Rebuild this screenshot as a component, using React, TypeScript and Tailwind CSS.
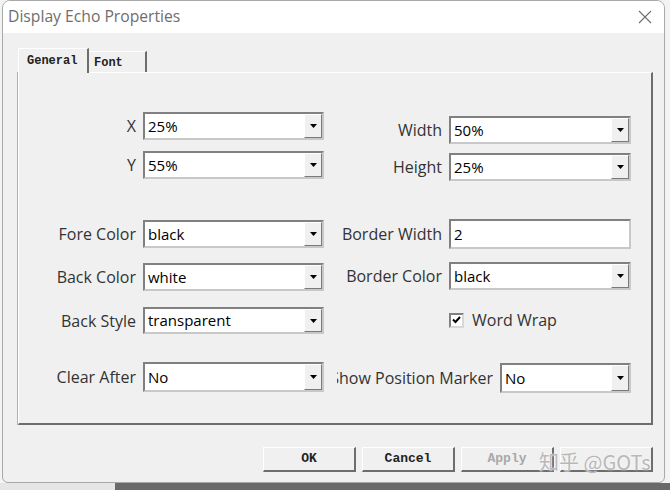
import React from 'react';

const sans = "font-['Open_Sans','Noto_Sans',sans-serif]";
const mono = "font-['Liberation_Mono',monospace]";

function Arrow() {
  return (
    <div className="w-[18px] flex items-center justify-center bg-[#f0f0f0] border-t border-l border-t-white border-l-white border-r border-b border-r-[#7a7a7a] border-b-[#7a7a7a]">
      <svg width="7" height="4" viewBox="0 0 7 4">
        <path d="M0 0h7L3.5 4z" fill="#000" />
      </svg>
    </div>
  );
}

function Combo({ value, w = 'w-[181px]', h = 'h-[28px]', arrow = true }: { value: string; w?: string; h?: string; arrow?: boolean }) {
  return (
    <div className={`${w} ${h} flex shrink-0 bg-white border-2 border-t-[#808080] border-l-[#808080] border-r-[#c8c8c8] border-b-[#c8c8c8]`}>
      <div className="flex-1 flex items-center pl-[3px] text-[15px] text-black leading-none">{value}</div>
      {arrow && <Arrow />}
    </div>
  );
}

function Field({ label, children }: { label: string; children: React.ReactNode }) {
  return (
    <div className="flex items-center justify-end gap-[7px]">
      <span className="text-[16px] text-[#333] whitespace-nowrap">{label}</span>
      {children}
    </div>
  );
}

function Btn({ label, disabled }: { label: string; disabled?: boolean }) {
  return (
    <div
      className={`w-[93px] h-[25px] flex items-center justify-center bg-[#f0f0f0] border-t border-l border-t-white border-l-white border-r-2 border-b-2 border-r-[#6d6d6d] border-b-[#6d6d6d] ${mono} text-[13px] font-bold ${disabled ? 'text-[#a8a8a8]' : 'text-[#222]'}`}
    >
      {label}
    </div>
  );
}

export default function App() {
  return (
    <div className={`w-[670px] h-[490px] bg-[#f3f3f3] overflow-hidden ${sans}`}>
      <div className="ml-[2px] w-[663px] h-[483px] flex flex-col bg-[#f0f0f0] border border-[#a9a9a9] rounded-t-[8px] rounded-b-[6px] overflow-hidden">
        {/* title bar */}
        <div className="h-[32px] shrink-0 bg-white flex items-center justify-between pl-[5px] pr-[12px]">
          <span className="text-[15.7px] text-[#6e6e6e]">Display Echo Properties</span>
          <svg width="14" height="14" viewBox="0 0 14 14">
            <path d="M1 1l12 12M13 1L1 13" stroke="#6e6e6e" strokeWidth="1.1" />
          </svg>
        </div>

        <div className="relative flex-1 flex flex-col pl-[15px]">
          {/* tabs */}
          <div className="flex items-end h-[39px] pt-[15px]">
            <div className={`w-[71px] h-[25px] -mb-[1px] z-10 bg-[#f0f0f0] border-t border-l border-t-white border-l-white border-r-2 border-r-[#6d6d6d] flex items-start pt-[3px] pl-[8px] ${mono} text-[12px] font-bold text-[#222]`}>
              General
            </div>
            <div className={`w-[58px] h-[21px] bg-[#f0f0f0] border-t border-t-white border-r-2 border-r-[#6d6d6d] flex items-start pt-[2px] pl-[5px] ${mono} text-[12px] font-bold text-[#222]`}>
              Font
            </div>
          </div>

          {/* panel */}
          <div className="w-[635px] h-[353px] flex border-t border-l border-t-white border-l-white border-r-2 border-b-2 border-r-[#6d6d6d] border-b-[#6d6d6d] shadow-[-1px_0_0_#b0b0b0]">
            <div className="w-[305px] flex flex-col">
              <div className="mt-[39px]"><Field label="X"><Combo value="25%" /></Field></div>
              <div className="mt-[11px]"><Field label="Y"><Combo value="55%" /></Field></div>
              <div className="mt-[41px]"><Field label="Fore Color"><Combo value="black" /></Field></div>
              <div className="mt-[15px]"><Field label="Back Color"><Combo value="white" /></Field></div>
              <div className="mt-[16px]"><Field label="Back Style"><Combo value="transparent" h="h-[27px]" /></Field></div>
              <div className="mt-[28px]"><Field label="Clear After"><Combo value="No" h="h-[30px]" /></Field></div>
            </div>
            <div className="w-[307px] flex flex-col">
              <div className="mt-[43px]"><Field label="Width"><Combo value="50%" w="w-[182px]" /></Field></div>
              <div className="mt-[9px]"><Field label="Height"><Combo value="25%" w="w-[182px]" /></Field></div>
              <div className="mt-[38px]"><Field label="Border Width"><Combo value="2" w="w-[182px]" h="h-[30px]" arrow={false} /></Field></div>
              <div className="mt-[13px]"><Field label="Border Color"><Combo value="black" w="w-[182px]" /></Field></div>
              <div className="mt-[22px] pl-[125px] flex items-center gap-[8px] h-[16px]">
                <div className="w-[15px] h-[15px] bg-white border-2 border-t-[#808080] border-l-[#808080] border-r-[#d8d8d8] border-b-[#d8d8d8] flex items-center justify-center">
                  <svg width="9" height="8" viewBox="0 0 9 8">
                    <path d="M1 3.5l2.5 2.5L8 1" stroke="#000" strokeWidth="2" fill="none" />
                  </svg>
                </div>
                <span className="text-[16px] text-[#333]">Word Wrap</span>
              </div>
              <div className="mt-[35px] flex items-center justify-end gap-[7px]">
                <div className="w-[156px] flex justify-end overflow-hidden">
                  <span className="shrink-0 text-[16px] text-[#333] whitespace-nowrap">Show Position Marker</span>
                </div>
                <Combo value="No" w="w-[131px]" h="h-[30px]" />
              </div>
            </div>
          </div>

          {/* buttons */}
          <div className="mt-[22px] w-[635px] flex justify-end gap-[6px]">
            <Btn label="OK" />
            <Btn label="Cancel" />
            <Btn label="Apply" disabled />
            <Btn label="" />
          </div>

          <div className="absolute left-[536px] top-[414px] text-[20px] text-[#b8b8b8] font-['Noto_Sans_CJK_SC',sans-serif] [text-shadow:0_0_2px_#fff]">
            知乎 @GOTs
          </div>
        </div>
      </div>
      <div className="h-[7px] flex">
        <div className="w-[115px] bg-[#e6e6e6]" />
        <div className="flex-1 bg-[#6a6a6a]" />
      </div>
    </div>
  );
}
